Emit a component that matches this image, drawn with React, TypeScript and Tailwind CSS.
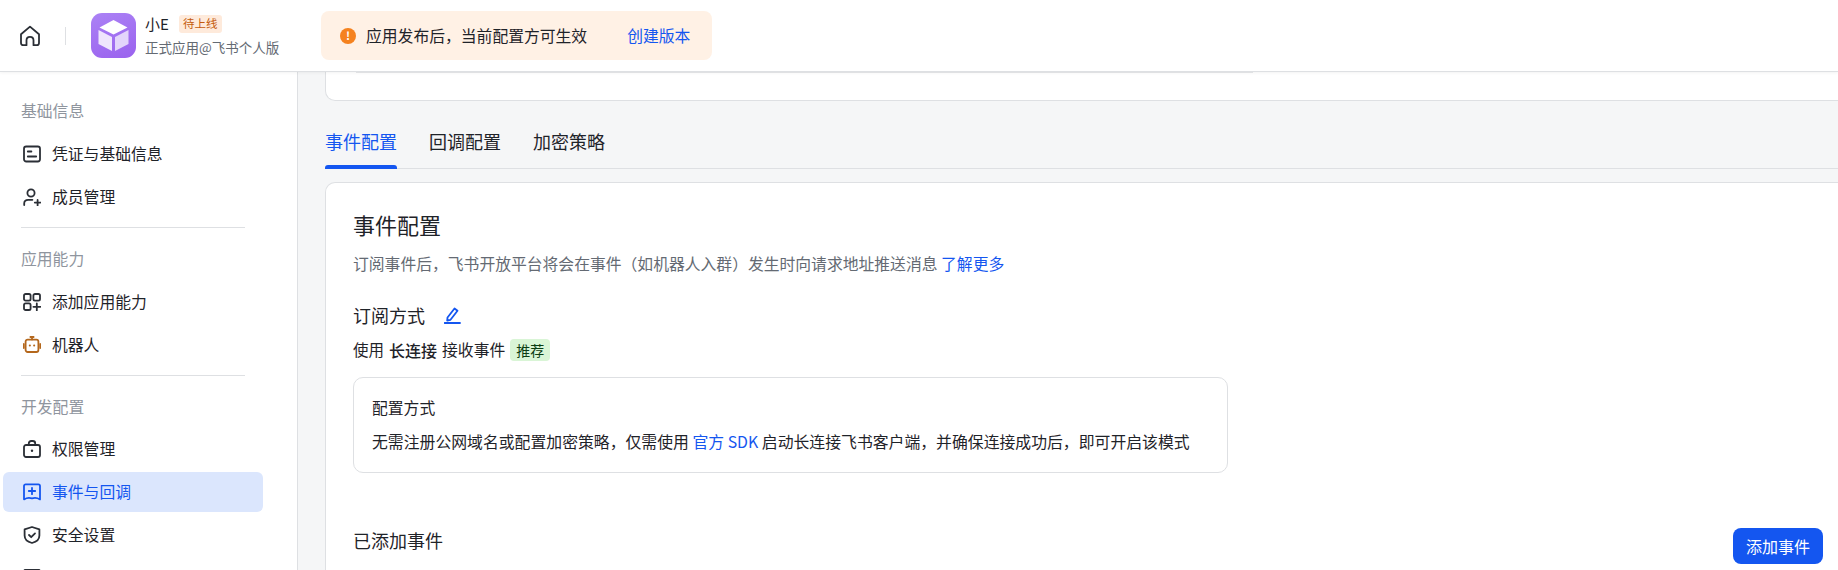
import type { ReactNode } from "react";

const ink = "#2b2f36";

function Glyph({ children, color = ink }: { children: ReactNode; color?: string }) {
  return (
    <svg width="18" height="18" viewBox="0 0 18 18" fill="none" stroke={color} strokeWidth="1.8" strokeLinecap="round" strokeLinejoin="round" className="shrink-0">
      {children}
    </svg>
  );
}

const icons: Record<string, ReactNode> = {
  card: (
    <Glyph>
      <rect x="1" y="1.5" width="16" height="15" rx="2.2" />
      <path d="M4.8 6.5h3.6M4.8 11.5h8.4" />
    </Glyph>
  ),
  member: (
    <Glyph>
      <circle cx="8" cy="5" r="3.6" />
      <path d="M1.2 17v-1.5c0-2.4 1.8-3.7 4-3.7h4.2M11.8 14.6h5.6M14.6 12v5.4" />
    </Glyph>
  ),
  apps: (
    <Glyph>
      <rect x="1" y="1" width="6.6" height="6.6" rx="1.6" />
      <rect x="10.4" y="1" width="6.6" height="6.6" rx="1.6" />
      <rect x="1" y="10.4" width="6.6" height="6.6" rx="1.6" />
      <path d="M10.4 13.8h7M13.8 10.4v7" />
    </Glyph>
  ),
  bot: (
    <Glyph color="#b4671c">
      <rect x="2.6" y="3.6" width="12.8" height="12.4" rx="2" />
      <path d="M9 1v2.4M7.4 1h3.2M.8 8v4M17.2 8v4" />
      <path d="M6.8 9.6h.1M11.1 9.6h.1" strokeWidth="2" />
    </Glyph>
  ),
  lock: (
    <Glyph>
      <rect x="1" y="5" width="16" height="12" rx="2" />
      <path d="M5.8 5V3.4C5.8 2 6.8 1 8.2 1h1.6c1.4 0 2.4 1 2.4 2.4V5" />
      <circle cx="9" cy="10.8" r="1.2" fill={ink} stroke="none" />
    </Glyph>
  ),
  event: (
    <Glyph color="#1456f0">
      <path d="M1 3c0-1 .7-1.6 1.6-1.6h12.8c.9 0 1.6.6 1.6 1.6v13.4c-2.6-1.6-5.2-1.9-8-1-2.8-.9-5.4-.6-8 1z" />
      <path d="M5.8 8h6.4M9 4.8v6.4" />
    </Glyph>
  ),
  shield: (
    <Glyph>
      <path d="M9 1l7.4 2.4v6c0 3.6-3 6.4-7.4 7.6-4.4-1.2-7.4-4-7.4-7.6v-6z" />
      <path d="M6 9l2.2 2.2L12 7.4" />
    </Glyph>
  ),
};

function NavGroup({ title, top, gap, children }: { title: string; top: string; gap: string; children: ReactNode }) {
  return (
    <div className={top}>
      <div className="h-[22px] pl-[21px] text-[15.8px] leading-[22px] text-[#8f959e]">{title}</div>
      <div className={`flex flex-col gap-[3px] ${gap}`}>{children}</div>
    </div>
  );
}

function NavItem({ icon, label, active }: { icon: string; label: string; active?: boolean }) {
  return (
    <div className={`ml-[3px] flex h-[40px] w-[260px] items-center gap-[11px] rounded-[6px] pl-[20px] text-[15.8px] ${active ? "bg-[#dbe6fd] text-[#1456f0]" : "text-[#1f2329]"}`}>
      {icons[icon]}
      <span>{label}</span>
    </div>
  );
}

export default function App() {
  return (
    <div className="flex h-[570px] flex-col overflow-hidden bg-white font-['Noto_Sans_CJK_SC','Noto_Sans',sans-serif] text-[#1f2329]">
      {/* top bar */}
      <header className="relative z-10 flex h-[72px] shrink-0 items-center border-b border-[#dee0e3] bg-white shadow-[0_1px_3px_rgba(0,0,0,0.05)]">
        <svg width="22" height="22" viewBox="0 0 22 22" fill="none" stroke={ink} strokeWidth="1.8" strokeLinejoin="round" className="ml-[19px] shrink-0">
          <path d="M2 9.2L11 1.6l9 7.6V18c0 1.2-.9 2.2-2.2 2.2h-3.3v-5c0-1.9-1.5-3.4-3.5-3.4s-3.5 1.5-3.5 3.4v5H4.2C2.9 20.2 2 19.2 2 18z" />
        </svg>
        <div className="ml-[24px] h-[18px] w-px bg-[#dee0e3]" />
        <div className="ml-[25px] flex h-[45px] w-[45px] shrink-0 items-center justify-center rounded-[11px] bg-[linear-gradient(160deg,#ab82f5,#9a62ee)]">
          <svg width="31" height="33" viewBox="0 0 31 33">
            <path d="M15.5 1L29.5 8.5 15.5 15.5 1.5 8.5z" fill="#ffffff" />
            <path d="M.5 11l13.5 7v14L.5 25z" fill="#efe6fd" />
            <path d="M30.5 11L17 18v14l13.500-7z" fill="#e3d5fb" />
          </svg>
        </div>
        <div className="-mt-[2px] ml-[9px] w-[176px] shrink-0">
          <div className="flex h-[20px] items-center">
            <span className="whitespace-nowrap text-[15px] leading-[20px] text-[#1f2329]">小E</span>
            <span className="ml-[10px] flex h-[18px] w-[43px] items-center justify-center rounded-[3px] bg-[#feeadb] text-[11.5px] text-[#c45a0c]">待上线</span>
          </div>
          <div className="mt-[4px] whitespace-nowrap text-[13.5px] leading-[18px] text-[#646a73]">正式应用@飞书个人版</div>
        </div>
        <div className="flex h-[49px] w-[391px] shrink-0 items-center rounded-[8px] bg-[#fff1e5] pl-[19px]">
          <span className="flex h-[16px] w-[16px] items-center justify-center rounded-full bg-[#f5821f] text-[11px] font-bold leading-none text-white">!</span>
          <span className="ml-[10px] text-[15.8px] text-[#1f2329]">应用发布后，当前配置方可生效</span>
          <span className="ml-[40px] text-[15.8px] text-[#1456f0]">创建版本</span>
        </div>
      </header>

      <div className="flex min-h-0 flex-1">
        {/* sidebar */}
        <aside className="h-full w-[298px] shrink-0 overflow-hidden border-r border-[#dee0e3] bg-white">
          <NavGroup title="基础信息" top="mt-[28px]" gap="mt-[12px]">
            <NavItem icon="card" label="凭证与基础信息" />
            <NavItem icon="member" label="成员管理" />
          </NavGroup>
          <div className="ml-[21px] mt-[10px] h-px w-[224px] bg-[#dee0e3]" />
          <NavGroup title="应用能力" top="mt-[20px]" gap="mt-[12px]">
            <NavItem icon="apps" label="添加应用能力" />
            <NavItem icon="bot" label="机器人" />
          </NavGroup>
          <div className="ml-[21px] mt-[10px] h-px w-[224px] bg-[#dee0e3]" />
          <NavGroup title="开发配置" top="mt-[20px]" gap="mt-[11px]">
            <NavItem icon="lock" label="权限管理" />
            <NavItem icon="event" label="事件与回调" active />
            <NavItem icon="shield" label="安全设置" />
          </NavGroup>
          <div className="ml-[23px] mt-[14px] h-[18px] w-[18px] rounded-[2px] border-[1.6px] border-[#2b2f36]" />
        </aside>

        {/* main column */}
        <main className="relative flex min-w-0 flex-1 flex-col overflow-hidden bg-[#f5f6f7] pl-[27px]">
          <div className="-mr-[12px] h-[29px] shrink-0 rounded-b-[10px] border border-t-0 border-[#dee0e3] bg-white">
            <div className="ml-[30px] h-px w-[897px] bg-[#e8e9eb]" />
          </div>

          <div className="mt-[23px] flex h-[45px] shrink-0 gap-[32px] border-b border-[#dee0e3] text-[18px] leading-[34px]">
            <div className="relative h-[44px] text-[#1456f0]">
              事件配置
              <div className="absolute inset-x-0 bottom-[-1px] h-[4px] rounded-t-[3px] bg-[#1456f0]" />
            </div>
            <div>回调配置</div>
            <div>加密策略</div>
          </div>

          <section className="-mr-[12px] mt-[13px] flex-1 rounded-t-[10px] border border-b-0 border-[#dee0e3] bg-white pl-[27px]">
            <h2 className="mt-[25px] text-[22px] font-normal leading-[32px] text-[#1f2329]">事件配置</h2>
            <p className="mt-[12px] text-[15.8px] leading-[24px] text-[#646a73]">
              订阅事件后，飞书开放平台将会在事件（如机器人入群）发生时向请求地址推送消息 <span className="text-[#1456f0]">了解更多</span>
            </p>

            <div className="mt-[26px] flex h-[26px] items-center gap-[19px] text-[18px]">
              <span>订阅方式</span>
              <svg width="17" height="17" viewBox="0 0 17 17" fill="none" stroke="#1456f0" strokeWidth="1.8" strokeLinejoin="round">
                <path d="M3.5 10.5L10.5 1.5l3 2.3-7 9-3.3.7z" />
                <path d="M.5 16h15.5" strokeLinecap="round" />
              </svg>
            </div>

            <div className="mt-[11px] flex h-[22px] items-center text-[15.5px]">
              <span>使用</span>
              <span className="mx-[5px] text-[16px] font-medium">长连接</span>
              <span className="text-[15.8px]">接收事件</span>
              <span className="ml-[5px] flex h-[22px] w-[40px] items-center justify-center rounded-[4px] bg-[#d9f5d6] text-[14px] text-[#0b3d12]">推荐</span>
            </div>

            <div className="mt-[16px] h-[96px] w-[875px] rounded-[10px] border border-[#dee0e3] bg-white pl-[18px]">
              <div className="mt-[18px] text-[15.8px] leading-[24px]">配置方式</div>
              <div className="mt-[10px] whitespace-nowrap text-[15.85px] leading-[24px]">
                无需注册公网域名或配置加密策略，仅需使用 <span className="text-[#1456f0]">官方 SDK</span> 启动长连接飞书客户端，并确保连接成功后，即可开启该模式
              </div>
            </div>

            <h3 className="mt-[54px] text-[18px] font-normal leading-[26px]">已添加事件</h3>
          </section>

          <button className="absolute bottom-[6px] right-[15px] h-[36px] w-[90px] rounded-[8px] bg-[#1456f0] text-[16px] text-white">添加事件</button>
        </main>
      </div>
    </div>
  );
}
